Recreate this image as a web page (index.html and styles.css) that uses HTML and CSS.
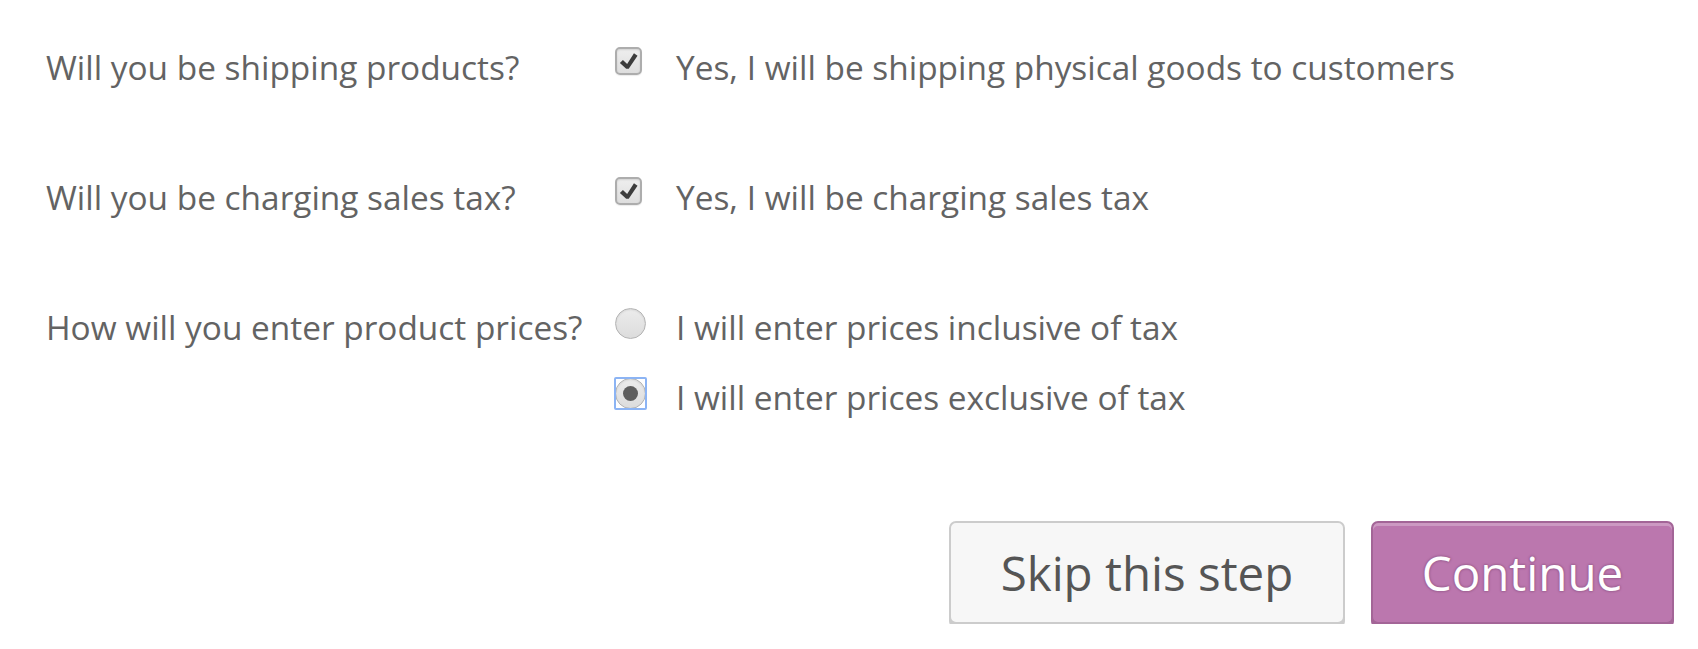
FILE: index.html
```html
<!DOCTYPE html>
<html lang="en">
<head>
<meta charset="utf-8">
<title>Store setup</title>
<link rel="stylesheet" href="styles.css">
</head>
<body>
<form class="setup">
  <div class="row">
    <div class="label">Will you be shipping products?</div>
    <div class="options">
      <label class="option">
        <span class="slot">
          <span class="checkbox checked">
            <svg viewBox="0 0 20 20" class="tick"><path d="M15.2 2.2l3.4 2.4-8.4 12.2H7.8L1.8 11.4l2.9-2.8 4 3.8z"/></svg>
          </span>
        </span>
        <span class="text">Yes, I will be shipping physical goods to customers</span>
      </label>
    </div>
  </div>
  <div class="row">
    <div class="label">Will you be charging sales tax?</div>
    <div class="options">
      <label class="option">
        <span class="slot">
          <span class="checkbox checked">
            <svg viewBox="0 0 20 20" class="tick"><path d="M15.2 2.2l3.4 2.4-8.4 12.2H7.8L1.8 11.4l2.9-2.8 4 3.8z"/></svg>
          </span>
        </span>
        <span class="text">Yes, I will be charging sales tax</span>
      </label>
    </div>
  </div>
  <div class="row">
    <div class="label">How will you enter product prices?</div>
    <div class="options">
      <label class="option">
        <span class="slot">
          <span class="radio"></span>
        </span>
        <span class="text">I will enter prices inclusive of tax</span>
      </label>
      <label class="option">
        <span class="slot">
          <span class="radio selected focused"><span class="dot"></span></span>
        </span>
        <span class="text">I will enter prices exclusive of tax</span>
      </label>
    </div>
  </div>
  <div class="actions">
    <button type="button" class="btn btn-skip">Skip this step</button>
    <button type="button" class="btn btn-primary">Continue</button>
  </div>
</form>
</body>
</html>
```

FILE: styles.css
```css
html, body {
  margin: 0;
  padding: 0;
  background: #ffffff;
}

body {
  font-family: "Open Sans", "Noto Sans", sans-serif;
  color: #636363;
}

.setup {
  padding: 32px 24px 0 46px;
}

.row {
  display: grid;
  grid-template-columns: 569px 1fr;
  padding-bottom: 60px;
  font-size: 33.4px;
  line-height: 70px;
}

.row:nth-child(3) {
  padding-bottom: 0;
}

.label {
  white-space: nowrap;
}

.options {
  display: flex;
  flex-direction: column;
}

.option {
  display: flex;
  align-items: flex-start;
}

.slot {
  width: 61px;
  flex: none;
  display: flex;
}

.text {
  white-space: nowrap;
}

.checkbox {
  box-sizing: border-box;
  width: 27px;
  height: 28px;
  margin-top: 15px;
  border: 2px solid #adadad;
  border-radius: 5px;
  background: linear-gradient(#eeeeee, #dedede);
  box-shadow: inset 0 1px 2px rgba(0, 0, 0, 0.12), 0 1px 1px rgba(0, 0, 0, 0.08);
  display: flex;
  align-items: center;
  justify-content: center;
}

.tick {
  width: 21px;
  height: 21px;
  fill: #3c3c3c;
}

.radio {
  box-sizing: border-box;
  width: 31px;
  height: 31px;
  margin-top: 16px;
  border: 1px solid #b4b4b4;
  border-radius: 50%;
  background: linear-gradient(#ececec, #dcdcdc);
  box-shadow: inset 0 1px 2px rgba(0, 0, 0, 0.1);
  display: flex;
  align-items: center;
  justify-content: center;
  position: relative;
}

.radio.focused::after {
  content: "";
  position: absolute;
  inset: -2px;
  border: 2px solid #8cb4f4;
  border-radius: 2px;
}

.dot {
  width: 15px;
  height: 15px;
  border-radius: 50%;
  background: #5e5e5e;
}

.actions {
  display: flex;
  justify-content: flex-end;
  gap: 26px;
  margin-top: 89px;
}

.btn {
  box-sizing: border-box;
  height: 103px;
  padding: 0;
  border-radius: 7px;
  font-family: "Open Sans", "Noto Sans", sans-serif;
  font-size: 47.5px;
  cursor: pointer;
}

.btn-skip {
  width: 396px;
  background: #f7f7f7;
  border: 2px solid #cccccc;
  color: #555555;
  box-shadow: 0 4px 0 #cccccc;
}

.btn-primary {
  width: 303px;
  background: #bb77ae;
  border: 2px solid #a36597;
  color: #ffffff;
  text-shadow: 0 -1px 2px #a36597, 1px 0 2px #a36597, 0 1px 2px #a36597, -1px 0 2px #a36597;
  box-shadow: inset 0 3px 0 rgba(255, 255, 255, 0.25), 0 4px 0 #a36597;
}
```
